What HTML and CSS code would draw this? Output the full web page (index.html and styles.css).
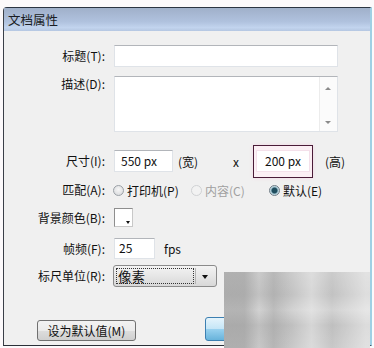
FILE: index.html
```html
<!DOCTYPE html>
<html lang="zh-CN">
<head>
  <meta charset="UTF-8">
  <title>文档属性</title>
  <link rel="stylesheet" href="styles.css">
</head>
<body>
  <div class="screen">
    <div class="dialog">
      <div class="titlebar">文档属性</div>

      <div class="content">
        <div class="row r-title">
          <label class="lbl">标题(T):</label>
          <div class="field wide"></div>
        </div>

        <div class="row r-desc">
          <label class="lbl">描述(D):</label>
          <div class="field area">
            <div class="scroll">
              <span class="arr up"></span>
              <span class="arr down"></span>
            </div>
          </div>
        </div>

        <div class="row r-size">
          <label class="lbl">尺寸(I):</label>
          <div class="field num">550 px</div>
          <span class="unit">(宽)</span>
          <span class="times">x</span>
          <span class="mark">
            <span class="field num hi">200 px</span>
          </span>
          <span class="unit hi-unit">(高)</span>
        </div>

        <div class="row r-match">
          <label class="lbl">匹配(A):</label>
          <span class="opt o1"><i class="radio"></i>打印机(P)</span>
          <span class="opt o2 off"><i class="radio"></i>内容(C)</span>
          <span class="opt o3"><i class="radio on"></i>默认(E)</span>
        </div>

        <div class="row r-bg">
          <label class="lbl">背景颜色(B):</label>
          <span class="swatch"><i></i></span>
        </div>

        <div class="row r-fps">
          <label class="lbl">帧频(F):</label>
          <div class="field fps">25</div>
          <span class="fps-unit">fps</span>
        </div>

        <div class="row r-ruler">
          <label class="lbl">标尺单位(R):</label>
          <div class="select">
            <span class="sel-text">像素</span>
            <span class="sel-btn"></span>
          </div>
        </div>

        <div class="buttons">
          <button class="btn">设为默认值(M)</button>
          <button class="btn ok">确定</button>
        </div>
      </div>
    </div>

    <div class="blur"></div>
  </div>
</body>
</html>
```

FILE: styles.css
```css
body {
  margin: 0;
  font-family: "Noto Sans CJK SC", "Liberation Sans", sans-serif;
  font-size: 12px;
  color: #111;
}
.screen {
  position: relative;
  width: 374px;
  height: 348px;
  overflow: hidden;
  background: #fcf9fb;
}
.dialog {
  margin: 7px 0 0 3px;
  width: 366px;
  height: 337px;
  border-top: 1px solid #2b3442;
  border-left: 1px solid #3a3f48;
  border-right: 2px solid #9fd0e4;
  border-bottom: 1px solid #2a2f38;
  border-top-left-radius: 4px;
  background: #f0f0f0;
}
.titlebar {
  height: 23px;
  line-height: 23px;
  padding-left: 4px;
  font-size: 12.5px;
  color: #1a1d24;
  background: linear-gradient(#a0b0ca, #b0c2de 60%, #c2d4ee 85%, #b5c7e2);
}
.content {
  padding-top: 14px;
}
.row {
  display: flex;
  align-items: center;
}
.lbl {
  width: 101px;
  margin-right: 9px;
  text-align: right;
  white-space: nowrap;
  line-height: 16px;
}
.field {
  box-sizing: border-box;
  background: #fff;
  border: 1px solid #dfe3e8;
  border-top-color: #b2b5ba;
  line-height: 18px;
  padding-left: 3px;
  white-space: nowrap;
}
.wide {
  width: 224px;
  height: 22px;
}
.r-desc {
  margin-top: 9px;
  align-items: flex-start;
}
.area {
  position: relative;
  width: 224px;
  height: 56px;
}
.scroll {
  position: absolute;
  right: 0;
  top: 0;
  bottom: 0;
  width: 17px;
  border-left: 1px solid #ececec;
  background: #fbfbfb;
}
.arr {
  position: absolute;
  left: 5px;
  width: 0;
  height: 0;
  border-left: 3px solid transparent;
  border-right: 3px solid transparent;
}
.arr.up {
  top: 10px;
  border-bottom: 3px solid #8a8a8a;
}
.arr.down {
  bottom: 7px;
  border-top: 3px solid #8a8a8a;
}
.r-size {
  margin-top: 18px;
  height: 22px;
}
.num {
  width: 59px;
  height: 22px;
  padding-left: 6px;
  line-height: 20px;
}
.unit {
  margin-left: 5px;
  width: 50px;
}
.times {
  width: 25px;
  padding-left: 5px;
  box-sizing: border-box;
}
.mark {
  display: flex;
  align-items: center;
  justify-content: center;
  width: 60px;
  height: 33px;
  margin: -6px 0;
  box-sizing: border-box;
  border: 1px solid #4a1c38;
  background: #fbeff4;
  box-shadow: 0 0 4px #f3d8e4;
}
.num.hi {
  width: 54px;
  height: 22px;
  padding-left: 8px;
  border-color: #f4e0ea;
}
.hi-unit {
  margin-left: 12px;
  width: auto;
}
.r-match {
  margin-top: 9px;
  height: 18px;
}
.opt {
  display: inline-flex;
  align-items: center;
  gap: 3px;
  margin-left: -1px;
  white-space: nowrap;
}
.o1 { width: 79px; }
.o2 { width: 79px; }
.off { color: #a0a0a0; }
.radio {
  display: inline-block;
  box-sizing: border-box;
  width: 11px;
  height: 11px;
  border-radius: 50%;
  border: 1px solid #9aa0a6;
  background: radial-gradient(circle at 50% 40%, #f6f6f6, #d4d6d9);
}
.off .radio {
  border-color: #d0d2d4;
  background: #f2f2f2;
}
.radio.on {
  border-color: #6f7c86;
  background: radial-gradient(circle, #1f4d5e 0 2.5px, #9fc3cf 3.5px, #e4eef2 5px);
}
.r-bg {
  margin-top: 9px;
  height: 19px;
}
.swatch {
  position: relative;
  display: inline-block;
  box-sizing: border-box;
  width: 19px;
  height: 19px;
  border: 1px solid #8e8e8e;
  border-right-color: #c8c8c8;
  border-bottom-color: #c8c8c8;
  background: #fff;
}
.swatch i {
  position: absolute;
  right: 2px;
  bottom: 2px;
  width: 0;
  height: 0;
  border-left: 2px solid transparent;
  border-right: 2px solid transparent;
  border-top: 3px solid #111;
}
.r-fps {
  margin-top: 11px;
  height: 21px;
}
.fps {
  width: 41px;
  height: 21px;
  padding-left: 4px;
}
.fps-unit {
  margin-left: 9px;
}
.r-ruler {
  margin-top: 6px;
  height: 22px;
}
.select {
  display: flex;
  box-sizing: border-box;
  width: 104px;
  height: 22px;
  margin-left: -1px;
  padding: 2px;
  border: 1px solid #8b8b8b;
  border-radius: 3px;
  background: linear-gradient(#f4f4f4, #e6e6e6 50%, #d8d8d8);
}
.sel-text {
  flex: 1;
  border: 1px dotted #333;
  font-size: 13.5px;
  line-height: 15px;
  padding-left: 1px;
}
.sel-btn {
  position: relative;
  width: 18px;
  border-left: 1px solid #b4b4b4;
  margin-left: 1px;
}
.sel-btn::after {
  content: "";
  position: absolute;
  left: 6px;
  top: 7px;
  border-left: 3.5px solid transparent;
  border-right: 3.5px solid transparent;
  border-top: 4px solid #111;
}
.buttons {
  display: flex;
  align-items: flex-end;
  margin-top: 30px;
  padding-left: 33px;
}
.btn {
  box-sizing: border-box;
  height: 21px;
  width: 99px;
  padding: 0;
  font-family: inherit;
  font-size: 12px;
  color: #111;
  border: 1px solid #707070;
  border-radius: 3px;
  background: linear-gradient(#f2f2f2, #ebebeb 50%, #dddddd 51%, #cfcfcf);
}
.ok {
  width: 75px;
  height: 24px;
  margin-left: 69px;
  border-color: #3c7fb1;
  background: linear-gradient(#e5f4fc, #c4e5f6 50%, #98d1ef 51%, #68b3db);
}
.blur {
  position: absolute;
  left: 224px;
  top: 272px;
  width: 146px;
  height: 76px;
  background:
    linear-gradient(90deg, rgba(150,150,150,0.5) 0 14%, rgba(0,0,0,0) 24%, rgba(140,140,140,0.3) 34%, rgba(0,0,0,0) 46%, rgba(255,255,255,0.35) 60%, rgba(0,0,0,0) 74%, rgba(255,255,255,0.45) 97%),
    linear-gradient(#cbcbcb, #c2c2c2 30%, #d2d2d2 50%, #bfbfbf 70%, #c8c8c8);
}
```
